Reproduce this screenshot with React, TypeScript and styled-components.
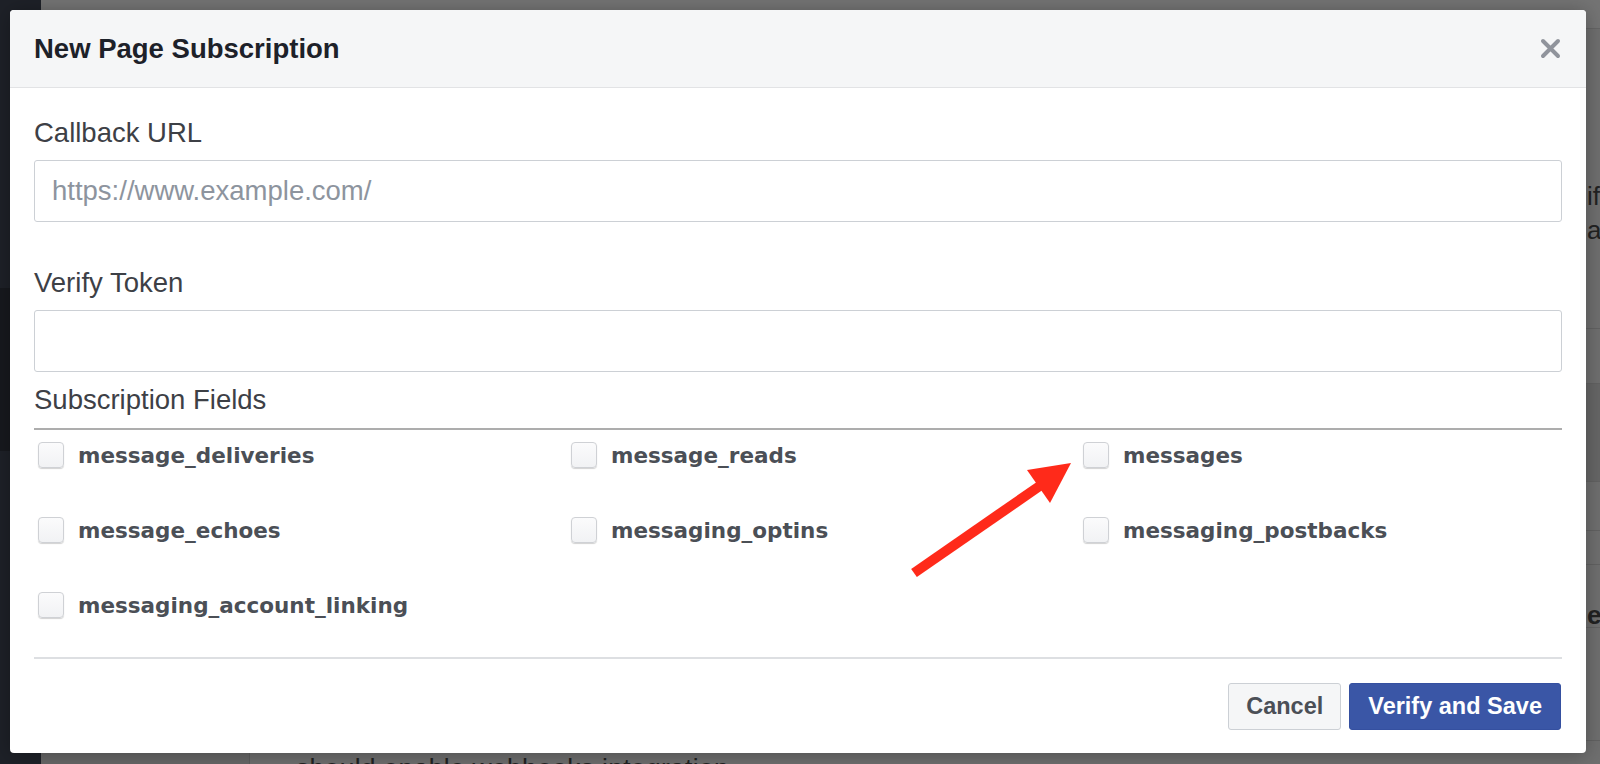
import React from "react";
import styled, { createGlobalStyle } from "styled-components";

const GlobalStyle = createGlobalStyle`
  html, body { margin: 0; padding: 0; overflow: hidden; }
  body { font-family: "Liberation Sans", Arial, sans-serif; }
  * { box-sizing: border-box; }
`;

const Root = styled.div`
  position: relative;
  width: 100%;
  height: 764px;
  overflow: hidden;
`;

/* ---------- background page (under dim overlay) ---------- */
const Page = styled.div`
  display: flex;
  height: 100%;
  background: #6c6c6c;
`;

const SideRail = styled.div`
  width: 41px;
  flex: none;
  background: #1e2128;
  display: flex;
  flex-direction: column;
  padding-top: 288px;
`;

const RailActive = styled.div`
  height: 163px;
  background: #17191e;
`;

const PageMain = styled.div`
  flex: 1;
  display: flex;
  flex-direction: column;
  min-width: 0;
`;

const PageTop = styled.div`
  height: 29px;
  flex: none;
  background: #747474;
  border-bottom: 1px solid #656565;
`;

const PageBody = styled.div`
  flex: 1;
  display: flex;
  min-height: 0;
`;

const SubNav = styled.div`
  width: 209px;
  flex: none;
  background: #686868;
  border-right: 1px solid #5e5e5e;
`;

const Content = styled.div`
  flex: 1;
  display: flex;
  flex-direction: column;
  background: #6f6f6f;
  min-width: 0;
`;

const ContentRow = styled.div<{ $h: number; $dark?: boolean }>`
  height: ${(p) => p.$h}px;
  flex: none;
  display: flex;
  border-bottom: 1px solid #626262;
  background: ${(p) => (p.$dark ? "#666666" : "transparent")};
`;

const RowSpacer = styled.div`
  width: 1337px;
  flex: none;
`;

const RowText = styled.div<{ $bold?: boolean; $pt: number }>`
  padding-top: ${(p) => p.$pt}px;
  font-size: 26px;
  line-height: 34px;
  font-weight: ${(p) => (p.$bold ? 700 : 400)};
  color: #222;
  white-space: nowrap;
`;

const BottomText = styled.div`
  padding: 12px 0 0 46px;
  font-size: 26.5px;
  letter-spacing: 0.3px;
  color: #222;
  white-space: nowrap;
`;

/* ---------- modal ---------- */
const Overlay = styled.div`
  position: absolute;
  inset: 0;
  padding: 10px 14px 0 10px;
`;

const Modal = styled.div`
  background: #fff;
  border-radius: 4px;
  overflow: hidden;
  box-shadow: 0 2px 20px rgba(0, 0, 0, 0.3);
  display: flex;
  flex-direction: column;
`;

const Header = styled.div`
  height: 78px;
  background: #f5f6f7;
  border-bottom: 1px solid #e2e3e5;
  display: flex;
  align-items: center;
  justify-content: space-between;
  padding: 0 25px 0 24px;
`;

const Title = styled.h2`
  margin: 0;
  font-family: "Liberation Sans", Arial, sans-serif;
  font-size: 27.5px;
  font-weight: 700;
  color: #1d2129;
`;

const CloseButton = styled.button`
  width: 22px;
  height: 22px;
  padding: 0;
  border: 0;
  background: transparent;
  display: flex;
  align-items: center;
  justify-content: center;
  cursor: pointer;
`;

const Body = styled.div`
  padding: 29px 24px 23px;
`;

const Field = styled.div<{ $gap: number }>`
  margin-bottom: ${(p) => p.$gap}px;
`;

const Label = styled.label`
  display: block;
  font-size: 27.5px;
  line-height: 32px;
  color: #3d4046;
  margin-bottom: 11px;
`;

const TextInput = styled.input`
  display: block;
  width: 100%;
  height: 62px;
  border: 1px solid #ccd0d5;
  border-radius: 3px;
  padding: 0 17px;
  font-family: "Liberation Sans", Arial, sans-serif;
  font-size: 27.5px;
  color: #1d2129;
  outline: none;
  &::placeholder {
    color: #8d949e;
  }
`;

const SectionTitle = styled.div`
  font-size: 27.5px;
  line-height: 32px;
  color: #3d4046;
  padding-bottom: 12px;
  border-bottom: 2px solid #adadad;
`;

const FieldGrid = styled.div`
  display: grid;
  grid-template-columns: 533px 512px 1fr;
  row-gap: 49px;
  padding: 12px 0 0 4px;
`;

const Option = styled.label`
  display: flex;
  align-items: center;
  gap: 14px;
  height: 26px;
  font-family: "DejaVu Sans", Verdana, sans-serif;
  font-size: 21.5px;
  font-weight: 700;
  color: #4b4f56;
  cursor: pointer;
`;

const Checkbox = styled.input`
  appearance: none;
  margin: 0;
  width: 26px;
  height: 26px;
  flex: none;
  border: 1px solid #cfd1d5;
  border-radius: 4px;
  background: linear-gradient(#fbfbfc, #f1f2f4);
  box-shadow: 0 1px 1px rgba(0, 0, 0, 0.18);
`;

const Footer = styled.div`
  margin-top: 39px;
  border-top: 2px solid #dddfe2;
  padding: 24px 1px 0 0;
  display: flex;
  justify-content: flex-end;
  gap: 8px;
`;

const Button = styled.button<{ $primary?: boolean }>`
  height: 47px;
  padding: 0 ${(p) => (p.$primary ? 18 : 17)}px;
  border-radius: 3px;
  font-family: "Liberation Sans", Arial, sans-serif;
  font-size: 23.5px;
  font-weight: 700;
  cursor: pointer;
  border: 1px solid ${(p) => (p.$primary ? "#3550a0" : "#ccd0d5")};
  background: ${(p) => (p.$primary ? "#3a56a6" : "#f5f6f7")};
  color: ${(p) => (p.$primary ? "#fff" : "#4b4f56")};
`;

const ArrowLayer = styled.svg`
  position: absolute;
  left: 0;
  top: 0;
  pointer-events: none;
`;

const fields = [
  "message_deliveries",
  "message_reads",
  "messages",
  "message_echoes",
  "messaging_optins",
  "messaging_postbacks",
  "messaging_account_linking",
];

export default function App() {
  return (
    <Root>
      <GlobalStyle />
      <Page>
        <SideRail>
          <RailActive />
        </SideRail>
        <PageMain>
          <PageTop />
          <PageBody>
            <SubNav />
            <Content>
              <ContentRow $h={300}>
                <RowSpacer />
                <RowText $pt={150}>
                  if you
                  <br />
                  a
                </RowText>
              </ContentRow>
              <ContentRow $h={55} />
              <ContentRow $h={98} $dark />
              <ContentRow $h={49} />
              <ContentRow $h={34} />
              <ContentRow $h={63}>
                <RowSpacer />
                <RowText $bold $pt={33}>
                  et
                </RowText>
              </ContentRow>
              <ContentRow $h={113} />
              <BottomText>should enable webhooks integration</BottomText>
            </Content>
          </PageBody>
        </PageMain>
      </Page>

      <Overlay>
        <Modal role="dialog" aria-label="New Page Subscription">
          <Header>
            <Title>New Page Subscription</Title>
            <CloseButton aria-label="Close">
              <svg width="21" height="21" viewBox="0 0 21 21">
                <path
                  d="M3 3 L18 18 M18 3 L3 18"
                  stroke="#90949c"
                  strokeWidth="4"
                  strokeLinecap="round"
                />
              </svg>
            </CloseButton>
          </Header>
          <Body>
            <Field $gap={45}>
              <Label>Callback URL</Label>
              <TextInput placeholder="https://www.example.com/" />
            </Field>
            <Field $gap={12}>
              <Label>Verify Token</Label>
              <TextInput />
            </Field>
            <SectionTitle>Subscription Fields</SectionTitle>
            <FieldGrid>
              {fields.map((f) => (
                <Option key={f}>
                  <Checkbox type="checkbox" />
                  {f}
                </Option>
              ))}
            </FieldGrid>
            <Footer>
              <Button>Cancel</Button>
              <Button $primary>Verify and Save</Button>
            </Footer>
          </Body>
        </Modal>
      </Overlay>

      <ArrowLayer width="1600" height="764" viewBox="0 0 1600 764">
        <line x1="914" y1="573" x2="1044" y2="483" stroke="#ff2a1a" strokeWidth="10" />
        <polygon points="1071,463 1027,470 1050,503" fill="#ff2a1a" />
      </ArrowLayer>
    </Root>
  );
}
